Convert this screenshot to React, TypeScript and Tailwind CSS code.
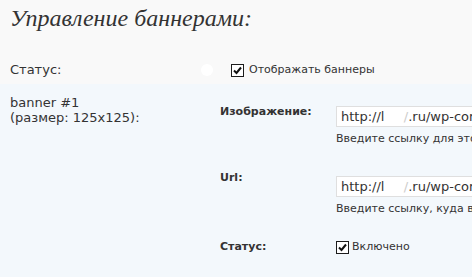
import React from 'react';

const Check: React.FC = () => (
  <span className="inline-flex w-[13px] h-[13px] shrink-0 items-center justify-center border border-[#1c1c1c] bg-white">
    <svg width="9" height="9" viewBox="0 0 9 9">
      <path d="M1 4.5 L3.5 7 L8 1.5" fill="none" stroke="#111" strokeWidth="2" />
    </svg>
  </span>
);

const UrlInput: React.FC = () => (
  <div className="w-[160px] h-[21px] flex items-center border border-[#dfdfdf] border-r-0 bg-white pl-[4px] text-[13px] whitespace-nowrap overflow-hidden">
    http://l<span className="text-transparent">ink</span><span className="text-[#ccc]">/</span>.ru/wp-content/uploads/banner.png
  </div>
);

const App: React.FC = () => {
  return (
    <div className="w-[472px] h-[277px] overflow-hidden bg-[#f9f9f9] text-[#333] font-['DejaVu_Sans',sans-serif]">
      <div className="h-[56px] pl-[10px] pt-[5px]">
        <h2 className="font-['Liberation_Serif',serif] italic text-[24px] leading-[26px] text-[#333]">
          Управление баннерами:
        </h2>
      </div>

      <div className="h-[28px] flex items-center text-[13px]">
        <div className="w-[201px] shrink-0 pl-[10px]">Статус:</div>
        <span className="w-[12px] h-[12px] shrink-0 rounded-full bg-white" />
        <div className="ml-[18px] flex items-center gap-[5px] text-[11px]">
          <Check />
          Отображать баннеры
        </div>
      </div>

      <div className="h-[193px] bg-[#f3f8fc] flex">
        <div className="w-[220px] shrink-0 pl-[10px] pt-[11px] text-[13px] leading-[15px]">
          banner #1
          <br />
          (размер: 125x125):
        </div>

        <div className="w-[252px] shrink-0 pt-[22px]">
          <div className="flex">
            <div className="w-[116px] shrink-0 -mt-[1px] text-[11px] font-bold leading-[13px]">Изображение:</div>
            <div className="min-w-0 overflow-hidden">
              <UrlInput />
              <div className="mt-[5px] text-[11px] leading-[13px] whitespace-nowrap">Введите ссылку для этого баннера</div>
            </div>
          </div>

          <div className="flex mt-[31px]">
            <div className="w-[116px] shrink-0 -mt-[5px] text-[11px] font-bold leading-[13px]">Url:</div>
            <div className="min-w-0 overflow-hidden">
              <UrlInput />
              <div className="mt-[5px] text-[11px] leading-[13px] whitespace-nowrap">Введите ссылку, куда ведёт баннер</div>
            </div>
          </div>

          <div className="flex items-center mt-[24px]">
            <div className="w-[116px] shrink-0 -mt-[2px] text-[11px] font-bold leading-[13px]">Статус:</div>
            <div className="flex items-center gap-[3px] text-[11px]">
              <Check />
              Включено
            </div>
          </div>
        </div>
      </div>
    </div>
  );
};

export default App;
